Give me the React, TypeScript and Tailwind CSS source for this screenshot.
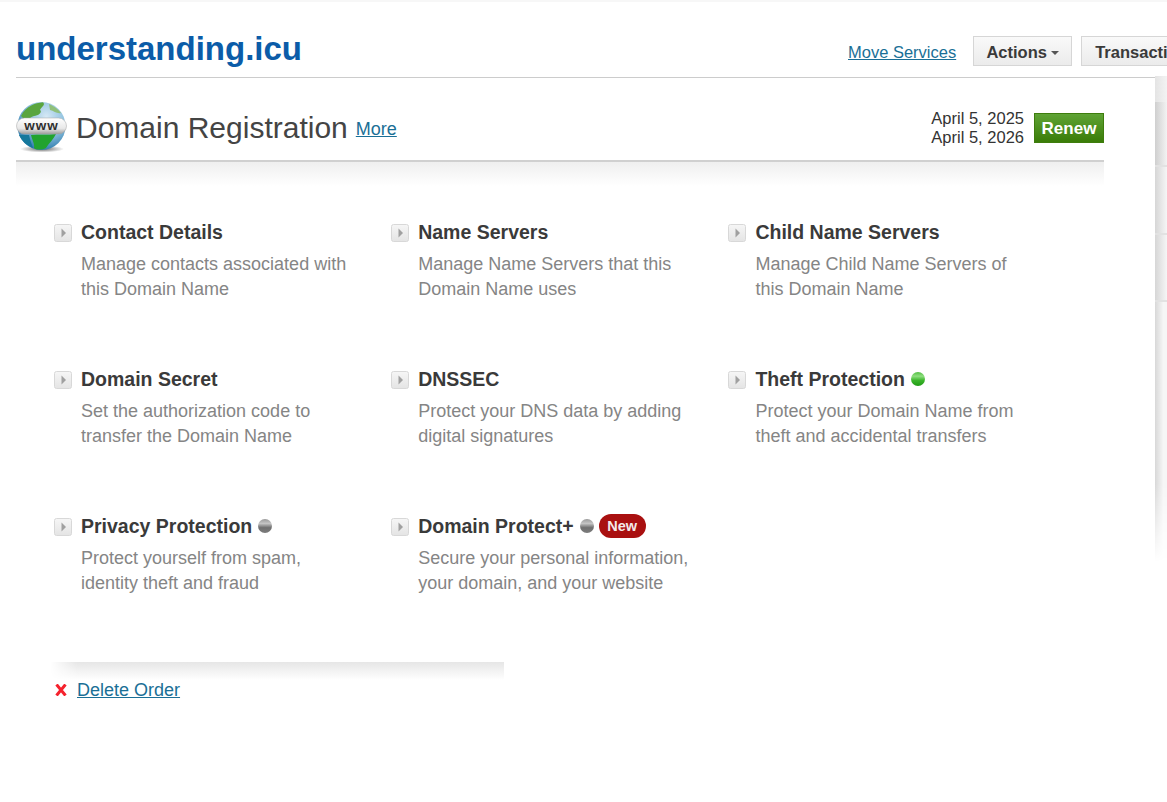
import React from "react";

const Arrow = () => (
  <svg width="18" height="18" viewBox="0 0 18 18" className="shrink-0">
    <defs>
      <linearGradient id="arrowBg" x1="0" y1="0" x2="0" y2="1">
        <stop offset="0" stopColor="#f6f6f6" />
        <stop offset="1" stopColor="#e4e4e4" />
      </linearGradient>
    </defs>
    <rect x="0.5" y="0.5" width="17" height="17" rx="2" fill="url(#arrowBg)" stroke="#d8d8d8" />
    <path d="M7.5 4.5 L12 9 L7.5 13.5 Z" fill="#a0a0a0" />
  </svg>
);

const Dot = ({ on }: { on?: boolean }) => (
  <span
    className={
      on
        ? "inline-block h-[14px] w-[14px] rounded-full bg-[linear-gradient(#52bd42,#8fdf80_30%,#3cb52c_60%,#1f9a14)]"
        : "inline-block h-[14px] w-[14px] rounded-full bg-[linear-gradient(#9a9a9a,#c4c4c4_32%,#6f6f6f_62%,#7d7d7d)]"
    }
  />
);

const Item = ({
  title,
  line1,
  line2,
  extra,
}: {
  title: string;
  line1: string;
  line2: string;
  extra?: React.ReactNode;
}) => (
  <div className="h-[147.2px]">
    <div className="flex h-[24px] items-center">
      <span className="mt-[2px] mr-[9px] flex"><Arrow /></span>
      <span className="text-[19.5px] font-bold leading-[24px] text-[#3a3a3a]">{title}</span>
      {extra}
    </div>
    <div className="mt-[8px] pl-[27px] text-[18px] leading-[25px] text-[#858585]">
      <div>{line1}</div>
      <div>{line2}</div>
    </div>
  </div>
);

const Globe = () => (
  <svg width="52" height="52" viewBox="0 0 52 52" className="shrink-0">
    <defs>
      <radialGradient id="ocean" cx="0.6" cy="0.3" r="0.8">
        <stop offset="0" stopColor="#d5e8f5" />
        <stop offset="0.5" stopColor="#8cc0de" />
        <stop offset="1" stopColor="#14689f" />
      </radialGradient>
      <linearGradient id="bar" x1="0" y1="0" x2="0" y2="1">
        <stop offset="0" stopColor="#ffffff" />
        <stop offset="0.65" stopColor="#e8e8e8" />
        <stop offset="1" stopColor="#9c9c9c" />
      </linearGradient>
      <radialGradient id="shadow" cx="0.5" cy="0.5" r="0.5">
        <stop offset="0" stopColor="#666" />
        <stop offset="1" stopColor="#fff" />
      </radialGradient>
    </defs>
    <ellipse cx="26" cy="48" rx="22" ry="3.5" fill="url(#shadow)" />
    <circle cx="25.5" cy="25" r="24" fill="url(#ocean)" />
    <path d="M5 15 C10 5 19 2 27 1.2 C30 4 25 6 24 9 C27 11 22 15 18 15 C14 16 13 19 9 19 Z" fill="#5aa53f" />
    <path d="M33 3 C38 5 42 8 45 12 C41 13 38 10 34 9 Z" fill="#8fc07a" />
    <path d="M15 34 C22 33 32 34 40 33 C37 39 33 42 30 47 C26 49 20 49 18 47 C19 43 16 39 15 34 Z" fill="#22a32f" />
    <path d="M3 34 C7 34 10 34 13 34 C14 39 16 44 17 47 C10 44 6 40 3 34 Z" fill="#16789c" />
    <rect x="0.5" y="17" width="50" height="16" rx="8" fill="url(#bar)" stroke="#a5a5a5" strokeWidth="0.5" />
    <text x="25.5" y="29" textAnchor="middle" fontFamily="'Liberation Sans', sans-serif" fontWeight="700" fontSize="13.5" fill="#2e2e2e" letterSpacing="1">www</text>
  </svg>
);

export default function App() {
  return (
    <div className="relative h-[802px] w-[1167px] overflow-hidden bg-white font-['Liberation_Sans',Arial,sans-serif]">
      <div className="h-[2px] bg-[#f7f7f7]" />
      <div className="ml-[16px] flex h-[76px] items-start justify-between border-b border-[#cccccc]">
        <h1 className="mt-[28px] whitespace-nowrap text-[33px] font-bold leading-[38px] text-[#0b5ca8]">understanding.icu</h1>
        <div className="mt-[34px] flex w-[319px] shrink-0 items-center">
          <a className="h-[30px] shrink-0 whitespace-nowrap text-[16.5px] leading-[32px] text-[#1a6f96] underline">Move Services</a>
          <button className="ml-[17px] flex h-[30px] w-[99px] shrink-0 items-center justify-center border border-[#d6d6d6] bg-[linear-gradient(#f9f9f9,#ebebeb)] pt-[2px] text-[16.5px] font-bold text-[#3a3a3a]">
            Actions
            <span className="ml-[4px] mt-[1px] h-0 w-0 border-x-[4.5px] border-t-[4px] border-x-transparent border-t-[#555555]" />
          </button>
          <button className="ml-[9px] h-[30px] w-[130px] shrink-0 overflow-hidden whitespace-nowrap border border-[#d6d6d6] bg-[linear-gradient(#f9f9f9,#ebebeb)] pl-[13px] pt-[2px] text-left text-[16.5px] font-bold text-[#3a3a3a]">
            Transactions
          </button>
        </div>
      </div>

      <div className="flex">
        <main className="w-[1155px] shrink-0">
          <div className="ml-[16px] w-[1088px]">
            <div className="flex h-[84px] items-start border-b-2 border-[#d0d0d0]">
              <div className="mt-[23px] flex"><Globe /></div>
              <h2 className="ml-[8px] mt-[32px] text-[30px] leading-[36px] text-[#444444]">Domain Registration</h2>
              <a className="ml-[8px] mt-[40px] text-[18px] leading-[22px] text-[#1a6f96] underline">More</a>
              <div className="ml-auto mt-[31px] text-right text-[16.5px] leading-[19px] text-[#333333]">
                <div>April 5, 2025</div>
                <div>April 5, 2026</div>
              </div>
              <button className="ml-[10px] mt-[35px] h-[30px] w-[70px] border border-[#3e7d0d] bg-[linear-gradient(#5fa335,#3a7c08)] pt-[1px] text-[17px] font-bold text-white">
                Renew
              </button>
            </div>
            <div className="h-[24px] bg-[linear-gradient(#efefef,#ffffff)]" />
          </div>

          <div className="ml-[54px] mt-[34px] grid w-[1011.6px] grid-cols-3">
            <Item title="Contact Details" line1="Manage contacts associated with" line2="this Domain Name" />
            <Item title="Name Servers" line1="Manage Name Servers that this" line2="Domain Name uses" />
            <Item title="Child Name Servers" line1="Manage Child Name Servers of" line2="this Domain Name" />
            <Item title="Domain Secret" line1="Set the authorization code to" line2="transfer the Domain Name" />
            <Item title="DNSSEC" line1="Protect your DNS data by adding" line2="digital signatures" />
            <Item
              title="Theft Protection"
              line1="Protect your Domain Name from"
              line2="theft and accidental transfers"
              extra={<span className="ml-[6px] flex"><Dot on /></span>}
            />
            <Item
              title="Privacy Protection"
              line1="Protect yourself from spam,"
              line2="identity theft and fraud"
              extra={<span className="ml-[6px] flex"><Dot /></span>}
            />
            <Item
              title="Domain Protect+"
              line1="Secure your personal information,"
              line2="your domain, and your website"
              extra={
                <>
                  <span className="ml-[6px] flex"><Dot /></span>
                  <span className="ml-[5px] flex h-[24px] w-[47px] items-center justify-center rounded-full bg-[#a91010] text-[14.5px] font-bold text-[#f4eaea]">
                    New
                  </span>
                </>
              }
            />
          </div>

          <div className="ml-[50px] h-[18px] w-[454px] bg-[linear-gradient(#e6e6e6,#ffffff)] [mask-image:linear-gradient(90deg,transparent,#000_6%)]" />
          <div className="ml-[55px] mt-[-2px] flex h-[24px] items-center">
            <svg width="12" height="12" viewBox="0 0 12 12" className="mt-[1px]">
              <path d="M1.5 0.5 L10.5 11.5 M10.5 0.5 L1.5 11.5" stroke="#f5222d" strokeWidth="3" />
            </svg>
            <a className="ml-[10px] text-[18px] leading-[24px] text-[#1a6f96] underline">Delete Order</a>
          </div>
        </main>

        <aside className="-mt-[2px] flex h-[486px] w-[12px] shrink-0 flex-col">
          <div className="h-[26px] bg-[linear-gradient(90deg,#e4e4e4,#f3f3f3)]" />
          <div className="h-[65px] border-b-2 border-[#e2e2e2] bg-[linear-gradient(90deg,#cfcfcf,#f3f3f3)]" />
          <div className="h-[68px] border-b-2 border-[#e2e2e2] bg-[linear-gradient(90deg,#d6d6d6,#f6f6f6)]" />
          <div className="h-[67px] border-b-2 border-[#e2e2e2] bg-[linear-gradient(90deg,#d6d6d6,#f6f6f6)]" />
          <div className="flex-1 bg-[linear-gradient(90deg,#d8d8d8,#f6f6f6_70%)] [mask-image:linear-gradient(#000_70%,transparent)]" />
        </aside>
      </div>
    </div>
  );
}
